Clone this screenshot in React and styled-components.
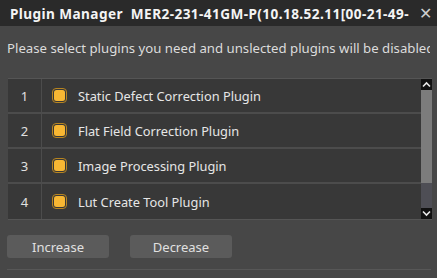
import React from 'react';
import styled, { createGlobalStyle } from 'styled-components';

const Global = createGlobalStyle`
  html, body {
    margin: 0;
    padding: 0;
    background: #474747;
    overflow: hidden;
  }
  * { box-sizing: border-box; }
`;

const Window = styled.div`
  width: 437px;
  height: 278px;
  background: #474747;
  font-family: "Noto Sans", "Open Sans", sans-serif;
  color: #e2e2e2;
  display: flex;
  flex-direction: column;
  overflow: hidden;
`;

const TitleBar = styled.div`
  height: 26px;
  flex: none;
  background: #2a2a2a;
  display: flex;
  align-items: center;
  padding: 0 0 0 10px;
  overflow: hidden;
`;

const Title = styled.div`
  flex: 1;
  min-width: 0;
  font-size: 13.6px;
  font-weight: 700;
  letter-spacing: 0.42px;
  color: #f4f4f4;
  white-space: pre;
  overflow: hidden;
`;

const Close = styled.div`
  width: 24px;
  flex: none;
  display: flex;
  justify-content: center;
  color: #cfcfcf;
  font-size: 16px;
`;

const Body = styled.div`
  padding: 12px 7px 0 7px;
  display: flex;
  flex-direction: column;
`;

const Hint = styled.div`
  font-size: 13.2px;
  white-space: nowrap;
  overflow: hidden;
  height: 20px;
  line-height: 20px;
  color: #dcdcdc;
`;

const Table = styled.div`
  margin-top: 20px;
  margin-left: 1px;
  height: 142px;
  width: 424px;
  display: flex;
  border-top: 1px solid #555;
  border-bottom: 1px solid #555;
  background: #383838;
`;

const Rows = styled.div`
  flex: 1;
  display: flex;
  flex-direction: column;
`;

const Row = styled.div`
  height: 35px;
  display: flex;
  align-items: center;
  border-bottom: ${({ $last }) => ($last ? 'none' : '2px solid #4c4c4c')};
`;

const Index = styled.div`
  width: 34px;
  align-self: stretch;
  display: flex;
  align-items: center;
  justify-content: center;
  border-right: 1px solid #4c4c4c;
  font-size: 13px;
  color: #e0e0e0;
`;

const Check = styled.div`
  width: 15px;
  height: 15px;
  margin-left: 10px;
  border-radius: 4px;
  border: 1.5px solid #b88520;
  padding: 1px;
  display: flex;

  &::after {
    content: '';
    flex: 1;
    border-radius: 2.5px;
    background: #f8b733;
  }
`;

const Label = styled.div`
  margin-left: 11px;
  font-size: 12.8px;
  color: #e6e6e6;
`;

const ScrollBar = styled.div`
  width: 11px;
  flex: none;
  display: flex;
  flex-direction: column;
  background: #5a5a5a;
`;

const Arrow = styled.div`
  height: 11px;
  flex: none;
  background: #111;
  display: flex;
  align-items: center;
  justify-content: center;
`;

const Track = styled.div`
  flex: 1;
  display: flex;
  flex-direction: column;
  background: #4e4e55;
`;

const Thumb = styled.div`
  height: 93px;
  background: #7c7c7c;
`;

const Buttons = styled.div`
  display: flex;
  gap: 21px;
  margin-top: 15px;
`;

const Button = styled.button`
  width: 102px;
  height: 23px;
  border: none;
  border-radius: 3px;
  background: #5b5b5b;
  color: #e0e0e0;
  font-family: inherit;
  font-size: 13px;
  padding: 0;
  cursor: pointer;
`;

const Rule = styled.div`
  margin-top: 11px;
  height: 1px;
  width: 424px;
  background: #575757;
`;

const plugins = [
  'Static Defect Correction Plugin',
  'Flat Field Correction Plugin',
  'Image Processing Plugin',
  'Lut Create Tool Plugin',
];

const Chevron = ({ up }) => (
  <svg width="9" height="7" viewBox="0 0 9 7">
    <path
      d={up ? 'M1 5.5 L4.5 2 L8 5.5' : 'M1 1.5 L4.5 5 L8 1.5'}
      stroke="#e8e8e8"
      strokeWidth="1.6"
      fill="none"
    />
  </svg>
);

export default function App() {
  return (
    <>
      <Global />
      <Window>
        <TitleBar>
          <Title>{'Plugin Manager  MER2-231-41GM-P(10.18.52.11[00-21-49-'}</Title>
          <Close>✕</Close>
        </TitleBar>
        <Body>
          <Hint>Please select plugins you need and unslected plugins will be disabled</Hint>
          <Table>
            <Rows>
              {plugins.map((p, i) => (
                <Row key={p} $last={i === plugins.length - 1}>
                  <Index>{i + 1}</Index>
                  <Check />
                  <Label>{p}</Label>
                </Row>
              ))}
            </Rows>
            <ScrollBar>
              <Arrow><Chevron up /></Arrow>
              <Track>
                <Thumb />
              </Track>
              <Arrow><Chevron /></Arrow>
            </ScrollBar>
          </Table>
          <Buttons>
            <Button>Increase</Button>
            <Button>Decrease</Button>
          </Buttons>
          <Rule />
        </Body>
      </Window>
    </>
  );
}
